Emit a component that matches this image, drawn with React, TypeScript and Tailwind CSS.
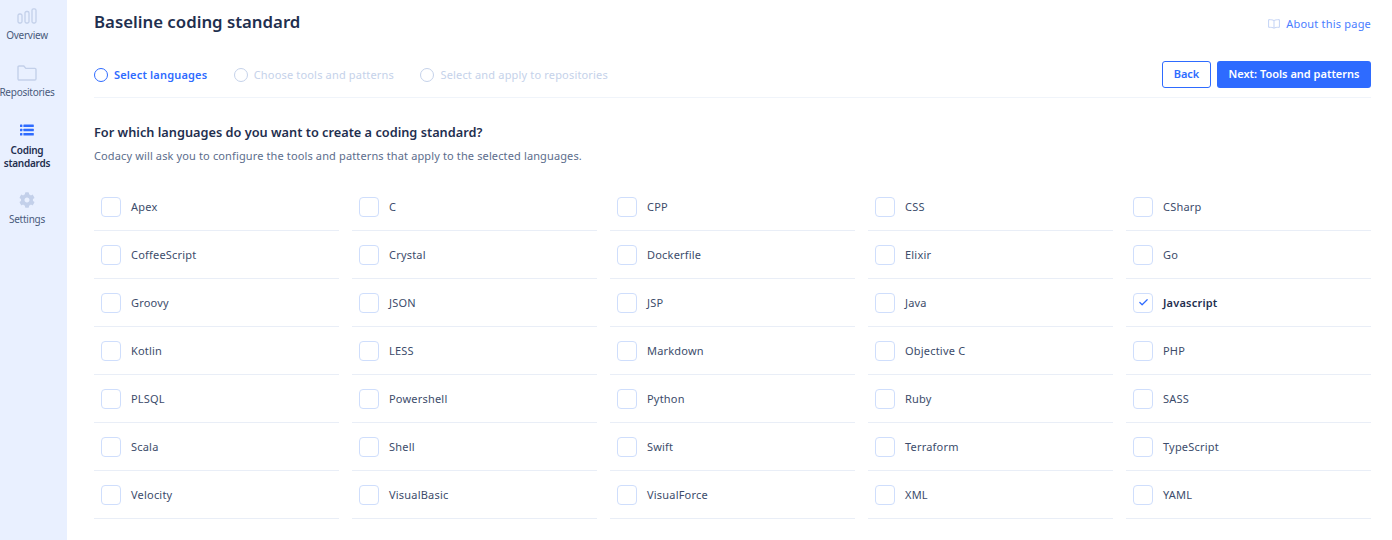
import React from 'react';
import { Check } from 'lucide-react';
import { FaCog } from 'react-icons/fa';

const languages = [
  'Apex', 'C', 'CPP', 'CSS', 'CSharp',
  'CoffeeScript', 'Crystal', 'Dockerfile', 'Elixir', 'Go',
  'Groovy', 'JSON', 'JSP', 'Java', 'Javascript',
  'Kotlin', 'LESS', 'Markdown', 'Objective C', 'PHP',
  'PLSQL', 'Powershell', 'Python', 'Ruby', 'SASS',
  'Scala', 'Shell', 'Swift', 'Terraform', 'TypeScript',
  'Velocity', 'VisualBasic', 'VisualForce', 'XML', 'YAML',
];

const steps = [
  { label: 'Select languages', active: true },
  { label: 'Choose tools and patterns', active: false },
  { label: 'Select and apply to repositories', active: false },
];

const Sidebar = () => (
  <aside className="w-[67px] shrink-0 bg-[#e9f0ff] min-h-[540px] pr-[13px]">
    <div className="w-[54px] flex flex-col items-center text-[10px] leading-[13px] tracking-[-0.25px] text-[#4a5b7c] text-center">
      <svg className="mt-[8px]" width="20" height="16" viewBox="0 0 20 16" fill="none" stroke="#c3d0ea" strokeWidth="1.3">
        <rect x="1" y="6" width="4" height="9" rx="1.5" />
        <rect x="8" y="3.5" width="4" height="11.5" rx="1.5" />
        <rect x="15" y="0.8" width="4" height="14.2" rx="1.5" />
      </svg>
      <span className="mt-[5px]">Overview</span>
      <svg className="mt-[23px]" width="20" height="16" viewBox="0 0 20 16" fill="none" stroke="#c3d0ea" strokeWidth="1.4">
        <path d="M1 2.2c0-.7.5-1.2 1.2-1.2h4.6l2 2.4h9c.7 0 1.2.5 1.2 1.2v9.2c0 .7-.5 1.2-1.2 1.2H2.2c-.7 0-1.2-.5-1.2-1.2z" />
      </svg>
      <span className="mt-[5px] whitespace-nowrap">Repositories</span>
      <svg className="mt-[25px]" width="14" height="12" viewBox="0 0 14 12" fill="#2e6bff">
        <rect x="0" y="0.5" width="2.4" height="2.6" rx="0.5" />
        <rect x="3.4" y="0.5" width="10.4" height="2.6" rx="0.5" />
        <rect x="0" y="4.7" width="2.4" height="2.6" rx="0.5" />
        <rect x="3.4" y="4.7" width="10.4" height="2.6" rx="0.5" />
        <rect x="0" y="8.9" width="2.4" height="2.6" rx="0.5" />
        <rect x="3.4" y="8.9" width="10.4" height="2.6" rx="0.5" />
      </svg>
      <span className="mt-[8px] font-semibold text-[#1f2f4f]">Coding<br />standards</span>
      <FaCog className="mt-[22px] text-[#c3d0ea]" size={16} />
      <span className="mt-[5px]">Settings</span>
    </div>
  </aside>
);

export default function App() {
  return (
    <div className="flex bg-white" style={{ fontFamily: '"Noto Sans", sans-serif' }}>
      <Sidebar />
      <main className="flex-1 pl-[27px] pr-[21px]">
        <header className="flex items-start justify-between pt-[10px] h-[46px]">
          <h1 className="text-[16.8px] leading-[24px] font-semibold text-[#1f2f4f]">Baseline coding standard</h1>
          <a className="flex items-center gap-[6px] mt-[6px] text-[11px] leading-[16px] text-[#4a7dff] tracking-[0.2px]">
            <svg width="12" height="10" viewBox="0 0 12 10" fill="none" stroke="#c3d3f5" strokeWidth="1">
              <path d="M6 1.6C5 .9 3 .6 .6 .7v7.6c2.4-.1 4.4.2 5.4.9 1-.7 3-1 5.4-.9V.7C9 .6 7 .9 6 1.6zM6 1.6v7.6" />
            </svg>
            About this page
          </a>
        </header>

        <div className="flex items-center justify-between h-[52px] pt-[7px] border-b border-[#f0f4fa]">
          <div className="flex items-center gap-[26.5px]">
            {steps.map((step) => (
              <div key={step.label} className={`flex items-center gap-[6px] text-[11px] leading-[16px] tracking-[0.17px] ${step.active ? 'text-[#2e6bff] font-semibold' : 'text-[#c5d2ea]'}`}>
                <span className={`w-[14px] h-[14px] rounded-full border ${step.active ? 'border-[#2e6bff]' : 'border-[#c5d2ea]'}`} />
                {step.label}
              </div>
            ))}
          </div>
          <div className="flex items-center gap-[6px] -mt-[1px]">
            <button className="w-[49px] h-[27px] rounded-[3px] border border-[#2e6bff] text-[11px] font-semibold text-[#2e6bff]">Back</button>
            <button className="w-[154px] h-[27px] rounded-[3px] bg-[#2e6bff] text-[11px] font-semibold text-white">Next: Tools and patterns</button>
          </div>
        </div>

        <h2 className="mt-[25px] text-[12.75px] leading-[18px] font-semibold text-[#1f2f4f]">For which languages do you want to create a coding standard?</h2>
        <p className="mt-[7px] text-[11px] leading-[16px] text-[#5c6d8c] tracking-[0.13px]">Codacy will ask you to configure the tools and patterns that apply to the selected languages.</p>

        <div className="mt-[19px] grid grid-cols-5 gap-x-[13px]">
          {languages.map((lang) => {
            const checked = lang === 'Javascript';
            return (
              <label key={lang} className="flex items-center h-[48px] pl-[7px] border-b border-[#e9eef7]">
                <span className="w-[20px] h-[20px] rounded-[4px] border border-[#cfdefc] flex items-center justify-center">
                  {checked && <Check size={11} strokeWidth={2.6} className="text-[#2e6bff]" />}
                </span>
                <span className={`ml-[10px] pt-[1px] text-[11px] leading-[16px] tracking-[0.2px] ${checked ? 'font-semibold text-[#1f2f4f]' : 'text-[#3c4c6b]'}`}>{lang}</span>
              </label>
            );
          })}
        </div>
      </main>
    </div>
  );
}
